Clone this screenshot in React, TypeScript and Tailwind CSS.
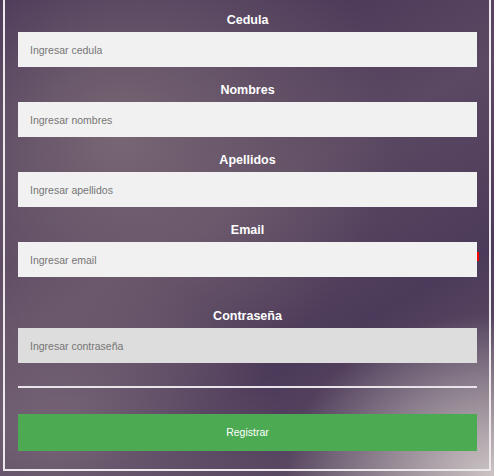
import { useState } from 'react'

type Field = { id: string; label: string; placeholder: string; type: string }

const fields: Field[] = [
  { id: 'cedula', label: 'Cedula', placeholder: 'Ingresar cedula', type: 'text' },
  { id: 'nombres', label: 'Nombres', placeholder: 'Ingresar nombres', type: 'text' },
  { id: 'apellidos', label: 'Apellidos', placeholder: 'Ingresar apellidos', type: 'text' },
  { id: 'email', label: 'Email', placeholder: 'Ingresar email', type: 'email' },
]

export default function App() {
  const [values, setValues] = useState<Record<string, string>>({})

  function update(id: string, value: string) {
    setValues((prev) => ({ ...prev, [id]: value }))
  }

  return (
    <div
      className="min-h-[476px] w-[494px] px-[3px] pb-[5px] font-['Liberation_Sans',Arial,sans-serif] bg-[radial-gradient(ellipse_55%_55%_at_24%_28%,rgba(128,110,120,0.85),transparent),radial-gradient(ellipse_42%_34%_at_100%_100%,#cbc3c4,transparent),radial-gradient(ellipse_45%_35%_at_12%_90%,rgba(128,110,124,0.8),transparent),linear-gradient(150deg,#3a2850_0%,#5b4862_45%,#4c3a5a_70%,#6a5a6c_100%)]"
    >
      <div className="border-x-2 border-b-2 border-t-0 border-[#ece8ec] pl-[13px] pr-[12px] pt-[13px] pb-[18px]">
        <form className="flex flex-col" onSubmit={(e) => e.preventDefault()}>
          {fields.map((field, idx) => (
            <div key={field.id} className={`flex flex-col ${idx > 0 ? 'mt-4' : ''}`}>
              <label htmlFor={field.id} className="block text-center text-[12.5px] leading-[15px] font-bold text-white mb-[4px]">
                {field.label}
              </label>
              <div className="relative">
                <input
                  id={field.id}
                  type={field.type}
                  placeholder={field.placeholder}
                  value={values[field.id] ?? ''}
                  onChange={(e) => update(field.id, e.target.value)}
                  className="block w-full h-[35px] bg-[#f1f1f1] px-3 text-[10.5px] text-[#333] placeholder:text-[#757575] outline-none"
                />
                {field.id === 'email' && (
                  <span className="absolute right-[-2px] top-[10px] w-[2px] h-[9px] bg-[#ff0000]" />
                )}
              </div>
            </div>
          ))}

          <div className="flex flex-col mt-8">
            <label htmlFor="password" className="block text-center text-[12.5px] leading-[15px] font-bold text-white mb-[4px]">
              Contraseña
            </label>
            <input
              id="password"
              type="password"
              placeholder="Ingresar contraseña"
              value={values.password ?? ''}
              onChange={(e) => update('password', e.target.value)}
              className="block w-full h-[35px] bg-[#dddddd] px-3 text-[10.5px] text-[#333] placeholder:text-[#757575] outline-none"
            />
          </div>

          <hr className="mt-[23px] border-0 border-t-2 border-[#e9e4ea]" />

          <button
            type="submit"
            className="mt-[26px] h-[37px] w-full bg-[#4caa52] text-white text-[10.5px]"
          >
            Registrar
          </button>
        </form>
      </div>
    </div>
  )
}
